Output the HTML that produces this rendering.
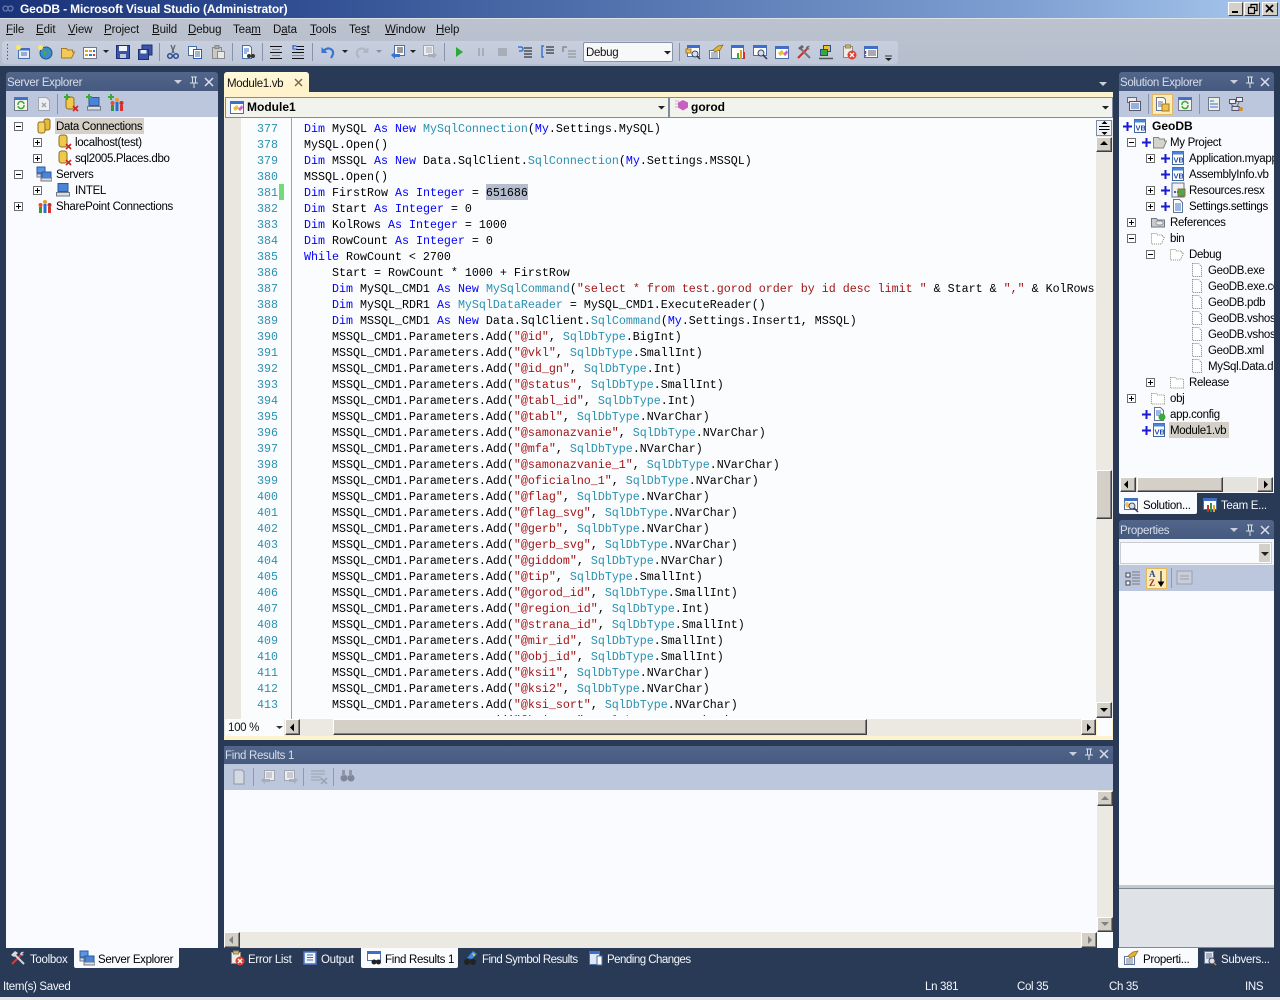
<!DOCTYPE html>
<html><head><meta charset="utf-8"><title>GeoDB - Microsoft Visual Studio</title>
<style>
html,body{margin:0;padding:0;width:1280px;height:1000px;overflow:hidden;background:#293a56}
body{position:relative;font:11.5px/16px "Liberation Sans",sans-serif;color:#000;letter-spacing:-.32px}
.a,.t{position:absolute}
.t{white-space:nowrap;height:16px;margin-top:1px}
.w{color:#f4f6fa}
.g{color:#d8dfeb}
u{text-decoration:underline}
.btn{position:absolute;box-sizing:border-box;background:#d4d0c8;border:1px solid;border-color:#fff #404040 #404040 #fff;box-shadow:inset -1px -1px 0 #808080}
.sbt{position:absolute;background:#ece9e2}
.hd{position:absolute;background:linear-gradient(#52658a,#465a80)}
.tb{position:absolute;background:#bcc7dd}
.wh{position:absolute;background:#f9fbff}
.tab{position:absolute;background:#f9fbff;border-radius:0 0 2px 2px}
pre{position:absolute;margin:0;font:11.67px/16px "Liberation Mono",monospace;letter-spacing:0;white-space:pre}
.k{color:#00f}.y{color:#2b91af}.s{color:#a31515}
svg{position:absolute;left:0;top:0;pointer-events:none}
</style></head>
<body>
<!-- title bar -->
<div class="a" style="left:0;top:0;width:1280px;height:18px;background:linear-gradient(90deg,#1a3278 0,#2c4a8e 20%,#5475b0 50%,#7fa0d2 80%,#a8c8ee 100%)"></div>
<div class="t" style="left:20px;top:0;color:#fff;font-weight:bold;font-size:12px;letter-spacing:-.15px">GeoDB - Microsoft Visual Studio (Administrator)</div>
<div class="a" style="left:1228px;top:2px;width:15px;height:14px;background:#d4d0c8;box-sizing:border-box;border:1px solid;border-color:#fff #404040 #404040 #fff"></div>
<div class="a" style="left:1244px;top:2px;width:16px;height:14px;background:#d4d0c8;box-sizing:border-box;border:1px solid;border-color:#fff #404040 #404040 #fff"></div>
<div class="a" style="left:1262px;top:2px;width:16px;height:14px;background:#d4d0c8;box-sizing:border-box;border:1px solid;border-color:#fff #404040 #404040 #fff"></div>
<!-- menu + toolbar band -->
<div class="a" style="left:0;top:18px;width:1280px;height:48px;background:linear-gradient(#bcc3cf,#b6bdcc);border-top:1px solid #dde1e8;box-sizing:border-box"></div>
<div class="a" style="left:2px;top:41px;width:896px;height:23px;background:linear-gradient(#c8d0df,#bfc8d9);border-radius:3px"></div>
<div class="t" style="left:6px;top:21px;color:#111;letter-spacing:-.1px"><u>F</u>ile</div>
<div class="t" style="left:36px;top:21px;color:#111;letter-spacing:-.1px"><u>E</u>dit</div>
<div class="t" style="left:68px;top:21px;color:#111;letter-spacing:-.1px"><u>V</u>iew</div>
<div class="t" style="left:104px;top:21px;color:#111;letter-spacing:-.1px"><u>P</u>roject</div>
<div class="t" style="left:152px;top:21px;color:#111;letter-spacing:-.1px"><u>B</u>uild</div>
<div class="t" style="left:188px;top:21px;color:#111;letter-spacing:-.1px"><u>D</u>ebug</div>
<div class="t" style="left:233px;top:21px;color:#111;letter-spacing:-.1px">Tea<u>m</u></div>
<div class="t" style="left:273px;top:21px;color:#111;letter-spacing:-.1px">D<u>a</u>ta</div>
<div class="t" style="left:310px;top:21px;color:#111;letter-spacing:-.1px"><u>T</u>ools</div>
<div class="t" style="left:349px;top:21px;color:#111;letter-spacing:-.1px">Te<u>s</u>t</div>
<div class="t" style="left:385px;top:21px;color:#111;letter-spacing:-.1px"><u>W</u>indow</div>
<div class="t" style="left:436px;top:21px;color:#111;letter-spacing:-.1px"><u>H</u>elp</div>
<!-- debug combo -->
<div class="a" style="left:583px;top:42px;width:90px;height:20px;box-sizing:border-box;background:#f7f8fa;border:1px solid #8a93a8;border-radius:2px"></div>
<div class="t" style="left:586px;top:44px;color:#111">Debug</div>

<!-- Server Explorer -->
<div class="hd" style="left:6px;top:72px;width:212px;height:19px;border-radius:3px 3px 0 0"></div>
<div class="t g" style="left:7px;top:74px">Server Explorer</div>
<div class="tb" style="left:6px;top:91px;width:212px;height:26px"></div>
<div class="wh" style="left:6px;top:117px;width:212px;height:831px"></div>
<div class="a" style="left:55px;top:118px;width:89px;height:16px;background:#d4d0c8"></div>
<div class="t" style="left:56px;top:118px">Data Connections</div>
<div class="t" style="left:75px;top:134px">localhost(test)</div>
<div class="t" style="left:75px;top:150px">sql2005.Places.dbo</div>
<div class="t" style="left:56px;top:166px">Servers</div>
<div class="t" style="left:75px;top:182px">INTEL</div>
<div class="t" style="left:56px;top:198px">SharePoint Connections</div>

<!-- Editor -->
<div class="a" style="left:224px;top:72px;width:85px;height:20px;background:linear-gradient(#fff8dc,#fff2c8);border-radius:3px 3px 0 0"></div>
<div class="t" style="left:227px;top:75px;color:#111">Module1.vb</div>
<div class="a" style="left:224px;top:92px;width:889px;height:648px;background:#fff3cd"></div>
<div class="a" style="left:225px;top:97px;width:888px;height:21px;background:#7f8ba3"></div>
<div class="a" style="left:226px;top:98px;width:442px;height:19px;background:#f3f3ee"></div>
<div class="a" style="left:670px;top:98px;width:442px;height:19px;background:#f3f3ee"></div>
<div class="t" style="left:247px;top:99px;margin-top:0;font-weight:bold;color:#000;letter-spacing:0;font-size:12px">Module1</div>
<div class="t" style="left:691px;top:99px;margin-top:0;font-weight:bold;color:#000;letter-spacing:0;font-size:12px">gorod</div>
<div class="wh" style="left:224px;top:118px;width:889px;height:601px;background:#fbfcfe"></div>
<div class="a" style="left:224px;top:118px;width:17px;height:601px;background:#e9e7e0"></div>
<div class="a" style="left:279px;top:184px;width:5px;height:16px;background:#6fdc78"></div>
<div class="a" style="left:291px;top:118px;width:1px;height:601px;background:#a0a0a0"></div>
<div class="a" style="left:242px;top:120px;width:36px;height:596px;overflow:hidden"><pre style="left:0;top:1px;width:36px;text-align:right;color:#2b91af">377
378
379
380
381
382
383
384
385
386
387
388
389
390
391
392
393
394
395
396
397
398
399
400
401
402
403
404
405
406
407
408
409
410
411
412
413
414</pre></div>
<div class="a" style="left:486px;top:184px;width:42px;height:16px;background:#b4bccd"></div>
<div class="a" style="left:304px;top:120px;width:791px;height:596px;overflow:hidden"><pre style="left:0;top:1px"><span class="k">Dim</span> MySQL <span class="k">As</span> <span class="k">New</span> <span class="y">MySqlConnection</span>(<span class="k">My</span>.Settings.MySQL)
MySQL.Open()
<span class="k">Dim</span> MSSQL <span class="k">As</span> <span class="k">New</span> Data.SqlClient.<span class="y">SqlConnection</span>(<span class="k">My</span>.Settings.MSSQL)
MSSQL.Open()
<span class="k">Dim</span> FirstRow <span class="k">As</span> <span class="k">Integer</span> = 651686
<span class="k">Dim</span> Start <span class="k">As</span> <span class="k">Integer</span> = 0
<span class="k">Dim</span> KolRows <span class="k">As</span> <span class="k">Integer</span> = 1000
<span class="k">Dim</span> RowCount <span class="k">As</span> <span class="k">Integer</span> = 0
<span class="k">While</span> RowCount &lt; 2700
    Start = RowCount * 1000 + FirstRow
    <span class="k">Dim</span> MySQL_CMD1 <span class="k">As</span> <span class="k">New</span> <span class="y">MySqlCommand</span>(<span class="s">"select * from test.gorod order by id desc limit "</span> &amp; Start &amp; <span class="s">","</span> &amp; KolRows
    <span class="k">Dim</span> MySQL_RDR1 <span class="k">As</span> <span class="y">MySqlDataReader</span> = MySQL_CMD1.ExecuteReader()
    <span class="k">Dim</span> MSSQL_CMD1 <span class="k">As</span> <span class="k">New</span> Data.SqlClient.<span class="y">SqlCommand</span>(<span class="k">My</span>.Settings.Insert1, MSSQL)
    MSSQL_CMD1.Parameters.Add(<span class="s">"@id"</span>, <span class="y">SqlDbType</span>.BigInt)
    MSSQL_CMD1.Parameters.Add(<span class="s">"@vkl"</span>, <span class="y">SqlDbType</span>.SmallInt)
    MSSQL_CMD1.Parameters.Add(<span class="s">"@id_gn"</span>, <span class="y">SqlDbType</span>.Int)
    MSSQL_CMD1.Parameters.Add(<span class="s">"@status"</span>, <span class="y">SqlDbType</span>.SmallInt)
    MSSQL_CMD1.Parameters.Add(<span class="s">"@tabl_id"</span>, <span class="y">SqlDbType</span>.Int)
    MSSQL_CMD1.Parameters.Add(<span class="s">"@tabl"</span>, <span class="y">SqlDbType</span>.NVarChar)
    MSSQL_CMD1.Parameters.Add(<span class="s">"@samonazvanie"</span>, <span class="y">SqlDbType</span>.NVarChar)
    MSSQL_CMD1.Parameters.Add(<span class="s">"@mfa"</span>, <span class="y">SqlDbType</span>.NVarChar)
    MSSQL_CMD1.Parameters.Add(<span class="s">"@samonazvanie_1"</span>, <span class="y">SqlDbType</span>.NVarChar)
    MSSQL_CMD1.Parameters.Add(<span class="s">"@oficialno_1"</span>, <span class="y">SqlDbType</span>.NVarChar)
    MSSQL_CMD1.Parameters.Add(<span class="s">"@flag"</span>, <span class="y">SqlDbType</span>.NVarChar)
    MSSQL_CMD1.Parameters.Add(<span class="s">"@flag_svg"</span>, <span class="y">SqlDbType</span>.NVarChar)
    MSSQL_CMD1.Parameters.Add(<span class="s">"@gerb"</span>, <span class="y">SqlDbType</span>.NVarChar)
    MSSQL_CMD1.Parameters.Add(<span class="s">"@gerb_svg"</span>, <span class="y">SqlDbType</span>.NVarChar)
    MSSQL_CMD1.Parameters.Add(<span class="s">"@giddom"</span>, <span class="y">SqlDbType</span>.NVarChar)
    MSSQL_CMD1.Parameters.Add(<span class="s">"@tip"</span>, <span class="y">SqlDbType</span>.SmallInt)
    MSSQL_CMD1.Parameters.Add(<span class="s">"@gorod_id"</span>, <span class="y">SqlDbType</span>.SmallInt)
    MSSQL_CMD1.Parameters.Add(<span class="s">"@region_id"</span>, <span class="y">SqlDbType</span>.Int)
    MSSQL_CMD1.Parameters.Add(<span class="s">"@strana_id"</span>, <span class="y">SqlDbType</span>.SmallInt)
    MSSQL_CMD1.Parameters.Add(<span class="s">"@mir_id"</span>, <span class="y">SqlDbType</span>.SmallInt)
    MSSQL_CMD1.Parameters.Add(<span class="s">"@obj_id"</span>, <span class="y">SqlDbType</span>.SmallInt)
    MSSQL_CMD1.Parameters.Add(<span class="s">"@ksi1"</span>, <span class="y">SqlDbType</span>.NVarChar)
    MSSQL_CMD1.Parameters.Add(<span class="s">"@ksi2"</span>, <span class="y">SqlDbType</span>.NVarChar)
    MSSQL_CMD1.Parameters.Add(<span class="s">"@ksi_sort"</span>, <span class="y">SqlDbType</span>.NVarChar)
    MSSQL_CMD1.Parameters.Add(<span class="s">"@ksi_txt"</span>, <span class="y">SqlDbType</span>.NVarChar)</pre></div>
<!-- editor v scroll -->
<div class="sbt" style="left:1096px;top:120px;width:17px;height:597px"></div>
<div class="a" style="left:1096px;top:120px;width:16px;height:16px;background:#eef1f6;box-sizing:border-box;border:1px solid #7f8ba3"></div>
<div class="btn" style="left:1096px;top:137px;width:16px;height:15px"></div>
<div class="btn" style="left:1096px;top:470px;width:16px;height:49px"></div>
<div class="btn" style="left:1096px;top:702px;width:16px;height:16px"></div>
<!-- editor h scroll -->
<div class="sbt" style="left:224px;top:719px;width:872px;height:17px"></div>
<div class="a" style="left:225px;top:719px;width:59px;height:17px;background:#fbfcfe"></div>
<div class="t" style="left:228px;top:719px;color:#111">100 %</div>
<div class="btn" style="left:285px;top:719px;width:15px;height:16px"></div>
<div class="btn" style="left:333px;top:719px;width:534px;height:16px"></div>
<div class="btn" style="left:1081px;top:719px;width:15px;height:16px"></div>
<div class="a" style="left:1097px;top:719px;width:15px;height:17px;background:#fbfcfe"></div>

<!-- Find Results -->
<div class="hd" style="left:224px;top:746px;width:889px;height:18px"></div>
<div class="t g" style="left:225px;top:747px">Find Results 1</div>
<div class="tb" style="left:224px;top:764px;width:889px;height:26px"></div>
<div class="wh" style="left:224px;top:790px;width:889px;height:158px"></div>
<div class="sbt" style="left:1097px;top:790px;width:16px;height:142px"></div>
<div class="btn" style="left:1097px;top:791px;width:16px;height:15px"></div>
<div class="btn" style="left:1097px;top:917px;width:16px;height:15px"></div>
<div class="sbt" style="left:224px;top:932px;width:873px;height:16px"></div>
<div class="btn" style="left:224px;top:932px;width:16px;height:16px"></div>
<div class="btn" style="left:1081px;top:932px;width:16px;height:16px"></div>

<!-- Solution Explorer -->
<div class="hd" style="left:1119px;top:72px;width:155px;height:19px;border-radius:3px 3px 0 0"></div>
<div class="t g" style="left:1120px;top:74px">Solution Explorer</div>
<div class="tb" style="left:1119px;top:91px;width:155px;height:26px"></div>
<div class="a" style="left:1152px;top:94px;width:21px;height:21px;box-sizing:border-box;background:#fdebb8;border:1px solid #e2b865"></div>
<div class="wh" style="left:1119px;top:117px;width:155px;height:376px;overflow:hidden">
<div class="t" style="left:33px;top:1px;margin-top:0;font-weight:bold;font-size:12px;letter-spacing:0">GeoDB</div>
<div class="t" style="left:51px;top:17px">My Project</div>
<div class="t" style="left:70px;top:33px">Application.myapp</div>
<div class="t" style="left:70px;top:49px">AssemblyInfo.vb</div>
<div class="t" style="left:70px;top:65px">Resources.resx</div>
<div class="t" style="left:70px;top:81px">Settings.settings</div>
<div class="t" style="left:51px;top:97px">References</div>
<div class="t" style="left:51px;top:113px">bin</div>
<div class="t" style="left:70px;top:129px">Debug</div>
<div class="t" style="left:89px;top:145px">GeoDB.exe</div>
<div class="t" style="left:89px;top:161px">GeoDB.exe.config</div>
<div class="t" style="left:89px;top:177px">GeoDB.pdb</div>
<div class="t" style="left:89px;top:193px">GeoDB.vshost.exe</div>
<div class="t" style="left:89px;top:209px">GeoDB.vshost.exe.manifest</div>
<div class="t" style="left:89px;top:225px">GeoDB.xml</div>
<div class="t" style="left:89px;top:241px">MySql.Data.dll</div>
<div class="t" style="left:70px;top:257px">Release</div>
<div class="t" style="left:51px;top:273px">obj</div>
<div class="t" style="left:51px;top:289px">app.config</div>
<div class="a" style="left:50px;top:305px;width:60px;height:16px;background:#d4d0c8"></div>
<div class="t" style="left:51px;top:305px">Module1.vb</div>
</div>
<div class="sbt" style="left:1120px;top:477px;width:153px;height:15px;background:#e4e3de"></div>
<div class="btn" style="left:1120px;top:477px;width:16px;height:15px"></div>
<div class="btn" style="left:1137px;top:477px;width:86px;height:15px"></div>
<div class="btn" style="left:1257px;top:477px;width:16px;height:15px"></div>
<div class="tab" style="left:1119px;top:493px;width:78px;height:21px"></div>
<div class="t" style="left:1143px;top:497px">Solution...</div>
<div class="t w" style="left:1221px;top:497px">Team E...</div>

<!-- Properties -->
<div class="hd" style="left:1119px;top:520px;width:155px;height:19px;border-radius:3px 3px 0 0"></div>
<div class="t g" style="left:1120px;top:522px">Properties</div>
<div class="a" style="left:1119px;top:539px;width:155px;height:26px;background:#f1f3f6"></div>
<div class="a" style="left:1120px;top:542px;width:152px;height:22px;background:#f9fbff;box-sizing:border-box;border:1px solid #c9ccd2"></div>
<div class="a" style="left:1259px;top:544px;width:11px;height:18px;background:#d4d0c8"></div>
<div class="tb" style="left:1119px;top:565px;width:155px;height:26px"></div>
<div class="a" style="left:1146px;top:568px;width:21px;height:21px;box-sizing:border-box;background:#fdebb8;border:1px solid #e2b865"></div>
<div class="wh" style="left:1119px;top:591px;width:155px;height:294px"></div>
<div class="a" style="left:1119px;top:885px;width:155px;height:4px;background:#c6c9d0;border-bottom:1px solid #808890;box-sizing:border-box"></div>
<div class="a" style="left:1119px;top:889px;width:155px;height:59px;background:#dfe2e7;box-sizing:border-box;border-bottom:1px solid #808890"></div>

<!-- bottom tabs -->
<div class="t w" style="left:30px;top:951px">Toolbox</div>
<div class="tab" style="left:74px;top:948px;width:105px;height:20px"></div>
<div class="t" style="left:98px;top:951px">Server Explorer</div>
<div class="t w" style="left:248px;top:951px">Error List</div>
<div class="t w" style="left:321px;top:951px">Output</div>
<div class="tab" style="left:361px;top:948px;width:97px;height:20px"></div>
<div class="t" style="left:385px;top:951px">Find Results 1</div>
<div class="t w" style="left:482px;top:951px;letter-spacing:-.52px">Find Symbol Results</div>
<div class="t w" style="left:607px;top:951px;letter-spacing:-.52px">Pending Changes</div>
<div class="tab" style="left:1118px;top:948px;width:80px;height:20px"></div>
<div class="t" style="left:1143px;top:951px">Properti...</div>
<div class="t w" style="left:1221px;top:951px">Subvers...</div>
<!-- status -->
<div class="t w" style="left:3px;top:978px">Item(s) Saved</div>
<div class="t w" style="left:925px;top:978px">Ln 381</div>
<div class="t w" style="left:1017px;top:978px">Col 35</div>
<div class="t w" style="left:1109px;top:978px">Ch 35</div>
<div class="t w" style="left:1245px;top:978px">INS</div>
<div class="a" style="left:0;top:997px;width:1280px;height:3px;background:#e6e4de"></div>

<!-- ICONS -->
<svg width="1280" height="1000" viewBox="0 0 1280 1000" style="z-index:5">
<defs>
<symbol id="mn" viewBox="0 0 9 9"><rect x=".5" y=".5" width="8" height="8" fill="#fff" stroke="#6e6e6e"/><path d="M2 4.5h5" stroke="#000"/></symbol>
<symbol id="pl" viewBox="0 0 9 9"><rect x=".5" y=".5" width="8" height="8" fill="#fff" stroke="#6e6e6e"/><path d="M2 4.5h5M4.500 2v5" stroke="#000"/></symbol>
<symbol id="vs" viewBox="0 0 9 9"><path d="M4.500 0v9M0 4.500h9" stroke="#1a1ad0" stroke-width="2"/></symbol>
<symbol id="db" viewBox="0 0 16 16"><rect x="8" y="1" width="6" height="11" rx="2" fill="#e8b93a" stroke="#8a6d1c"/><rect x="2" y="4" width="7" height="11" rx="2" fill="#f4d35e" stroke="#8a6d1c"/></symbol>
<symbol id="dbx" viewBox="0 0 16 16"><rect x="2" y="1" width="8" height="12" rx="2.500" fill="#f0c94a" stroke="#8a6d1c"/><path d="M9 10l5 5M14 10l-5 5" stroke="#d81e1e" stroke-width="1.600"/></symbol>
<symbol id="pc" viewBox="0 0 16 16"><rect x="3" y="1.500" width="10" height="8" fill="#4a84d8" stroke="#2f5a9a"/><rect x="1.500" y="10.500" width="13" height="3.500" fill="#d8dde6" stroke="#70788a"/></symbol>
<symbol id="pcs" viewBox="0 0 16 16"><rect x="1" y="1" width="8" height="6" fill="#5a94e4" stroke="#2f5a9a"/><rect x="6" y="6" width="9" height="6" fill="#4a84d8" stroke="#2f5a9a"/><rect x="5" y="12" width="11" height="3" fill="#d8dde6" stroke="#70788a"/><rect x="1" y="8" width="4" height="3" fill="#d8dde6" stroke="#70788a"/></symbol>
<symbol id="sp" viewBox="0 0 16 16"><circle cx="3.500" cy="7" r="2" fill="#e34f2b"/><rect x="2" y="9" width="3" height="6" fill="#2a9a3c"/><circle cx="8" cy="4" r="2" fill="#e8a020"/><rect x="6.500" y="6" width="3" height="9" fill="#2a6ed0"/><circle cx="12.500" cy="7" r="2" fill="#d02a2a"/><rect x="11" y="9" width="3" height="6" fill="#d8352a"/></symbol>
<symbol id="fo" viewBox="0 0 16 16"><path d="M1.500 3.500h5l1 1.500h5v2h2l-3 7h-10z" fill="#d4d4cc" stroke="#808878"/></symbol>
<symbol id="fd" viewBox="0 0 16 16"><path d="M1.500 3.500h5l1 1.500h7v9h-13z" fill="#fff" stroke="#8d8d70" stroke-dasharray="1 1"/></symbol>
<symbol id="fdo" viewBox="0 0 16 16"><path d="M1.500 3.500h5l1 1.500h5v2h2l-3 7h-10z" fill="#fff" stroke="#8d8d70" stroke-dasharray="1 1"/></symbol>
<symbol id="fr" viewBox="0 0 16 16"><path d="M1.500 4.500h5l1 1.500h7v7h-13z" fill="#c9cbcc" stroke="#70787e"/><rect x="6" y="7" width="7" height="4" rx="2" fill="#e8ecef" stroke="#70787e" stroke-width=".7"/></symbol>
<symbol id="fl" viewBox="0 0 16 16"><path d="M3.500 1.500h6l3 3v10h-9z" fill="#fff" stroke="#6f7f9a" stroke-dasharray="1 1"/></symbol>
<symbol id="vb" viewBox="0 0 16 16"><rect x="2.500" y="1.500" width="11" height="13" fill="#fff" stroke="#40669a"/><rect x="2.500" y="1.500" width="11" height="3" fill="#4a84d8"/><text x="3.500" y="12.500" font-family="Liberation Sans,sans-serif" font-size="7.500" font-weight="bold" fill="#1a4aa8" letter-spacing="0">VB</text></symbol>
<symbol id="doc" viewBox="0 0 16 16"><path d="M3.500 1.500h6l3 3v10h-9z" fill="#fff" stroke="#5f7396"/><path d="M5 6h6M5 8h6M5 10h6M5 12h6" stroke="#3a6ed0"/></symbol>
<symbol id="gr" viewBox="0 0 16 16"><path d="M3.500 1.500h6l3 3v10h-9z" fill="#fff" stroke="#5f7396"/><path d="M5 5h5M5 7h5M5 9h3" stroke="#3a6ed0"/><circle cx="11" cy="11" r="3.500" fill="#3aa83a"/></symbol>
<symbol id="dbt" viewBox="0 0 16 16"><rect x="2" y="1" width="12" height="14" fill="#eef0f4" stroke="#5f7396"/><path d="M4 9h2v2H4zM7 9h2v2H7z" fill="#40669a"/><rect x="8" y="7" width="7" height="7" fill="#4fa850" stroke="#9a6a2a"/></symbol>
<symbol id="win" viewBox="0 0 16 16"><rect x="1.500" y="2.500" width="13" height="11" fill="#fff" stroke="#4a6ea8"/><rect x="1.500" y="2.500" width="13" height="2.500" fill="#3a6ed0"/></symbol>
<symbol id="new" viewBox="0 0 16 16"><rect x="3.500" y="4.500" width="11" height="10" fill="#e4ecf8" stroke="#4a6ea8"/><rect x="3.500" y="4.500" width="11" height="2" fill="#3a6ed0"/><path d="M6 9h6M6 11h6" stroke="#4a6ea8"/><circle cx="3.500" cy="3.500" r="2.500" fill="#ffe860"/></symbol>
<symbol id="glb" viewBox="0 0 16 16"><circle cx="9" cy="9" r="6" fill="#3a8ad0" stroke="#27568c"/><path d="M6 6l3 1 1 3-3 2zM11 5l3 3-2 1z" fill="#4aa84a"/><circle cx="3.500" cy="3.500" r="2.500" fill="#ffe860"/></symbol>
<symbol id="opn" viewBox="0 0 16 16"><path d="M1.500 4.500h5l1 1.500h5v2h2l-3 6h-10z" fill="#f5c85a" stroke="#a57a20"/></symbol>
<symbol id="add" viewBox="0 0 16 16"><rect x="1.500" y="3.500" width="13" height="11" fill="#fff" stroke="#70788a"/><path d="M3 6h3v2H3zM7 6h3v2H7zM3 10h3v2H3z" fill="#e0a030"/><path d="M11 6h2v2h-2zM7 10h3v2H7z" fill="#3a6ed0"/><path d="M11 10h2v2h-2z" fill="#d04030"/></symbol>
<symbol id="sv" viewBox="0 0 16 16"><rect x="1.500" y="1.500" width="13" height="13" fill="#3a55a8" stroke="#1d2f70"/><rect x="4" y="2" width="8" height="5" fill="#f0f4fa"/><rect x="5" y="10" width="6" height="4" fill="#c0c8d8"/></symbol>
<symbol id="sva" viewBox="0 0 16 16"><rect x="5" y="1" width="10" height="10" fill="#3a55a8" stroke="#1d2f70"/><rect x="1.500" y="5.500" width="10" height="10" fill="#3a55a8" stroke="#1d2f70"/><rect x="3.500" y="6" width="6" height="3.500" fill="#e8eef8"/></symbol>
<symbol id="cut" viewBox="0 0 16 16"><path d="M6 1l3 8M10 1L7 9" stroke="#606878" stroke-width="1.300"/><circle cx="5" cy="12" r="2.300" fill="none" stroke="#2a4a98" stroke-width="1.500"/><circle cx="11" cy="12" r="2.300" fill="none" stroke="#2a4a98" stroke-width="1.500"/></symbol>
<symbol id="cpy" viewBox="0 0 16 16"><rect x="1.500" y="2.500" width="8" height="9" fill="#fff" stroke="#4a6ea8"/><rect x="6.500" y="5.500" width="8" height="9" fill="#fff" stroke="#2a5ac0"/><path d="M8 8h5M8 10h5M8 12h5" stroke="#4a6ea8"/></symbol>
<symbol id="pst" viewBox="0 0 16 16"><rect x="2.500" y="3.500" width="9" height="11" fill="#c8c8c4" stroke="#8a8a8a"/><rect x="7.500" y="7.500" width="7" height="7" fill="#e8e8e8" stroke="#8a8a8a"/><rect x="5" y="1.500" width="4" height="3" fill="#aaa" stroke="#888"/></symbol>
<symbol id="fnd" viewBox="0 0 16 16"><path d="M2.500 1.500h7l2 2v11h-9z" fill="#fff" stroke="#4a6ea8"/><path d="M4 5h5M4 7h5M4 9h3" stroke="#3a6ed0"/><circle cx="9" cy="12" r="2" fill="#333"/><circle cx="13" cy="12" r="2" fill="#333"/></symbol>
<symbol id="c1" viewBox="0 0 16 16"><path d="M2 2.500h12M2 8.500h12M2 14.500h12" stroke="#111"/><path d="M4 5.500h8M4 11.500h8" stroke="#2ab0c0"/></symbol>
<symbol id="c2" viewBox="0 0 16 16"><path d="M6 2.500h8M6 5.500h8M2 8.500h12M2 14.500h12" stroke="#111"/><path d="M2 11.500h12" stroke="#2ab0c0"/><path d="M3 5a2 2 0 014-2M3 1v4h4" stroke="#2a5ac0" fill="none"/></symbol>
<symbol id="und" viewBox="0 0 16 16"><path d="M4 7a5 5 0 018-1c2 2 1 5-1 8" fill="none" stroke="#3a74d0" stroke-width="2.200"/><path d="M1.500 3v6h6z" fill="#3a74d0"/></symbol>
<symbol id="red" viewBox="0 0 16 16"><path d="M12 7a5 5 0 00-8-1c-2 2-1 5 1 8" fill="none" stroke="#b0b6c2" stroke-width="2.200"/><path d="M14.500 3v6h-6z" fill="#b0b6c2"/></symbol>
<symbol id="nb" viewBox="0 0 16 16"><rect x="4.500" y="1.500" width="10" height="10" fill="#fff" stroke="#4a6ea8"/><path d="M7 4h6M7 6h6M7 8h6" stroke="#333"/><path d="M1 11l4-3v2h5v3H5v2z" fill="#3a74d0"/></symbol>
<symbol id="nf" viewBox="0 0 16 16"><rect x="1.500" y="1.500" width="10" height="10" fill="#eceef2" stroke="#a0a6b0"/><path d="M4 4h6M4 6h6M4 8h6" stroke="#a0a6b0"/><path d="M15 11l-4-3v2H6v3h5v2z" fill="#a8aeb8"/></symbol>
<symbol id="i1" viewBox="0 0 16 16"><path d="M7 4h8M7 7h8M7 10h8M7 13h8" stroke="#111"/><path d="M1 3h3a2 2 0 010 4H2" fill="none" stroke="#3a74d0" stroke-width="1.500"/></symbol>
<symbol id="i2" viewBox="0 0 16 16"><path d="M7 3h8M7 6h8M7 9h8" stroke="#111"/><path d="M5 2H3v11h2" fill="none" stroke="#3a74d0" stroke-width="1.500"/></symbol>
<symbol id="i3" viewBox="0 0 16 16"><path d="M7 7h8M7 10h8M7 13h8" stroke="#8a8a8a"/><path d="M2 8V3h4" fill="none" stroke="#8a8a8a" stroke-width="1.500"/></symbol>
<symbol id="t1" viewBox="0 0 16 16"><rect x="2.500" y="1.500" width="12" height="11" fill="#fff" stroke="#4a6ea8"/><rect x="2.500" y="1.500" width="12" height="2.500" fill="#3a6ed0"/><path d="M1 5h5v4H1z" fill="#f0c050" stroke="#a57a20"/><circle cx="10" cy="10" r="3" fill="#cfe0f4" stroke="#445"/><path d="M12 12l3 3" stroke="#335" stroke-width="1.500"/></symbol>
<symbol id="t2" viewBox="0 0 16 16"><rect x="1.500" y="6.500" width="10" height="8" fill="#fff" stroke="#5f7396"/><path d="M3 9h7M3 11h7M3 13h7" stroke="#6a7a98"/><path d="M5 6l5-4 5-1-3 5-5 2z" fill="#e8b030" stroke="#8a6d1c" stroke-width=".7"/></symbol>
<symbol id="t3" viewBox="0 0 16 16"><rect x="1.500" y="1.500" width="12" height="13" fill="#fff" stroke="#4a6ea8"/><rect x="1.500" y="1.500" width="12" height="2.500" fill="#3a6ed0"/><rect x="7" y="9" width="2" height="6" fill="#3aa83a"/><rect x="10" y="6" width="2" height="9" fill="#e8a020"/><rect x="13" y="8" width="2" height="7" fill="#d03030"/></symbol>
<symbol id="t4" viewBox="0 0 16 16"><rect x="1.500" y="1.500" width="13" height="10" fill="#fff" stroke="#4a6ea8"/><rect x="1.500" y="1.500" width="13" height="2.500" fill="#3a6ed0"/><circle cx="9" cy="9" r="3" fill="#cfe0f4" stroke="#445"/><path d="M11 11l4 4" stroke="#335" stroke-width="1.500"/></symbol>
<symbol id="t5" viewBox="0 0 16 16"><rect x="1.500" y="2.500" width="13" height="12" fill="#fff" stroke="#4a6ea8"/><rect x="1.500" y="2.500" width="13" height="2.500" fill="#3a6ed0"/><path d="M4 9l4-3 2 3-4 3z" fill="#e8c030"/><path d="M9 10l4-4 1 3-3 3z" fill="#d060c0"/></symbol>
<symbol id="t6" viewBox="0 0 16 16"><path d="M2 14l9-9" stroke="#c03030" stroke-width="2"/><path d="M14 14L5 5" stroke="#777" stroke-width="2"/><path d="M2 4l4-3 2 2-4 3zM10 4a3 3 0 014-2l-2 2 2 1a3 3 0 01-4-1z" fill="#666"/></symbol>
<symbol id="t7" viewBox="0 0 16 16"><rect x="5.500" y="1.500" width="7" height="6" fill="#e8c030" stroke="#2a4a98"/><rect x="2.500" y="5.500" width="7" height="6" fill="#3aa83a" stroke="#2a4a98"/><path d="M1 14.500h14" stroke="#555" stroke-width="1.500"/></symbol>
<symbol id="err" viewBox="0 0 16 16"><rect x="2.500" y="2.500" width="9" height="11" fill="#f0eee4" stroke="#8a8a8a"/><rect x="4.500" y="1" width="5" height="3" fill="#d8b860" stroke="#886"/><circle cx="11" cy="11" r="4.500" fill="#e04030"/><path d="M9 9l4 4M13 9l-4 4" stroke="#fff" stroke-width="1.300"/></symbol>
<symbol id="t9" viewBox="0 0 16 16"><rect x="1.500" y="2.500" width="13" height="11" fill="#fff" stroke="#4a6ea8"/><rect x="1.500" y="2.500" width="13" height="2.500" fill="#3a6ed0"/><path d="M5 7h8M5 9h8M5 11h8" stroke="#556"/><path d="M2.500 7v3M2.500 11v1.500" stroke="#e02020" stroke-width="1.500"/></symbol>
<symbol id="ref" viewBox="0 0 16 16"><rect x="1.500" y="1.500" width="13" height="13" fill="#f6f3e8" stroke="#70788a"/><rect x="1.500" y="1.500" width="13" height="2.500" fill="#3a6ed0"/><path d="M5 9a3 3 0 016-1M11 9a3 3 0 01-6 1" fill="none" stroke="#3aa83a" stroke-width="1.500"/></symbol>
<symbol id="del" viewBox="0 0 16 16"><path d="M2.500 1.500h8l3 3v10h-11z" fill="#eceef2" stroke="#a0a6b0"/><path d="M6 7l4 4M10 7l-4 4" stroke="#a0a6b0" stroke-width="1.500"/></symbol>
<symbol id="gl" viewBox="0 0 16 16"><path d="M3 1h8l2 2v12H3z" fill="#d5d9e2" stroke="#8e95a5"/></symbol>
<symbol id="sol" viewBox="0 0 16 16"><rect x="1.500" y="1.500" width="13" height="11" fill="#fff" stroke="#4a6ea8"/><rect x="1.500" y="1.500" width="13" height="2.500" fill="#3a6ed0"/><path d="M1 6l4-1 2 4-3 2z" fill="#f0c050"/><circle cx="9" cy="9" r="3" fill="#cfe0f4" stroke="#445"/><path d="M11 11l4 4" stroke="#335" stroke-width="1.500"/></symbol>
<symbol id="tools" viewBox="0 0 16 16"><path d="M2 14l9-9" stroke="#d04040" stroke-width="2"/><path d="M14 14L5 5" stroke="#d0d4dc" stroke-width="2"/><path d="M1 5l4-4 3 2-4 4zM10 4a3 3 0 014-2l-2 2 2 1a3 3 0 01-4-1z" fill="#d8dce2"/></symbol>
<symbol id="out" viewBox="0 0 16 16"><rect x="2" y="2" width="12" height="12" fill="#eef2fa" stroke="#4a74c8" stroke-width="1.500"/><path d="M5 5h6M5 7.500h6M5 10h6" stroke="#4a6ea8"/></symbol>
<symbol id="fr1" viewBox="0 0 16 16"><rect x="1.500" y="1.500" width="13" height="9" fill="#fff" stroke="#4a6ea8"/><rect x="1.500" y="1.500" width="13" height="2.500" fill="#3a6ed0"/><circle cx="8" cy="12" r="2.500" fill="#222"/><circle cx="12.500" cy="12" r="2.500" fill="#222"/></symbol>
<symbol id="fs" viewBox="0 0 16 16"><circle cx="4" cy="12" r="3" fill="#222"/><circle cx="10" cy="12" r="3" fill="#222"/><path d="M4 8l6-7 4 3-5 5z" fill="#3a8ae0"/><path d="M9 3l3 1-1 3z" fill="#f0d040"/></symbol>
<symbol id="pc2" viewBox="0 0 16 16"><rect x="1.500" y="1.500" width="10" height="13" fill="#dfe8f6" stroke="#4a6ea8"/><rect x="1.500" y="1.500" width="10" height="2.500" fill="#3a6ed0"/><rect x="9" y="6" width="5" height="9" fill="#fff" stroke="#4a6ea8"/></symbol>
<symbol id="prop" viewBox="0 0 16 16"><rect x="1.500" y="6.500" width="10" height="8" fill="#fff" stroke="#5f7396"/><path d="M3 9h7M3 11h7M3 13h7" stroke="#6a7a98"/><path d="M5 6l5-4 5-1-3 5-5 2z" fill="#e8b030" stroke="#8a6d1c" stroke-width=".7"/></symbol>
<symbol id="sub" viewBox="0 0 16 16"><rect x="2.500" y="1.500" width="9" height="12" fill="#e6ecf6" stroke="#68788e"/><path d="M4 4h6M4 6h6M4 8h6" stroke="#68788e"/><circle cx="10" cy="11" r="3" fill="#d8e2ee" stroke="#445"/><path d="M12 13l2 2" stroke="#d88820" stroke-width="1.500"/></symbol>
<symbol id="team" viewBox="0 0 16 16"><rect x="1.500" y="1.500" width="13" height="11" fill="#fff" stroke="#4a6ea8"/><rect x="1.500" y="1.500" width="13" height="2.500" fill="#3a6ed0"/><rect x="5" y="8" width="2" height="7" fill="#d02a2a"/><rect x="8" y="6" width="2" height="9" fill="#2a9a3c"/><rect x="11" y="8" width="2" height="7" fill="#e8a020"/></symbol>
<symbol id="se1" viewBox="0 0 16 16"><rect x="2.500" y="1.500" width="11" height="13" fill="#eef0e8" stroke="#70788a"/><path d="M4 5h4M4 8h8M4 11h8" stroke="#3a6ed0"/></symbol>
<symbol id="se2" viewBox="0 0 16 16"><rect x="1.500" y="3.500" width="6" height="4" fill="#eef0f4" stroke="#556"/><rect x="8.500" y="1.500" width="6" height="4" fill="#eef0f4" stroke="#556"/><path d="M3 8l3 3M11 6l-2 5" stroke="#667"/><rect x="4" y="10.500" width="7" height="4" fill="#cfe0f4" stroke="#556"/><circle cx="13" cy="13" r="2" fill="#e08a20"/></symbol>
<symbol id="se3" viewBox="0 0 16 16"><rect x="1.500" y="1.500" width="9" height="5" fill="#e8eaee" stroke="#667"/><rect x="3.500" y="5.500" width="11" height="9" fill="#eef0f4" stroke="#556"/><path d="M5 8h8M5 10h8M5 12h8" stroke="#3a6ed0"/></symbol>
<symbol id="se4" viewBox="0 0 16 16"><path d="M2.500 1.500h7l2 2v11h-9z" fill="#fff" stroke="#5f7396"/><path d="M4 6h5M4 8h5M4 10h4" stroke="#5f7396"/><path d="M8 8h7v7H8z" fill="#f0c050" stroke="#a57a20"/></symbol>
</defs>

<!-- title icon / window buttons -->
<path d="M3 8.500a2.500 2.500 0 015 0a2.500 2.500 0 005 0a2.500 2.500 0 00-5 0a2.500 2.500 0 01-5 0z" fill="none" stroke="#6a7ab0" stroke-width="1.300"/>
<path d="M1232 12h6" stroke="#000" stroke-width="2"/>
<path d="M1248.500 7.500h6v6h-6zM1251 7V4.500h6v6h-2" fill="none" stroke="#000" stroke-width="1.200"/>
<path d="M1266 5l7 7M1273 5l-7 7" stroke="#000" stroke-width="1.800"/>

<!-- toolbar grips -->
<path d="M7.500 44v16" stroke="#50596e" stroke-dasharray="1.500 2"/>
<path d="M885 56h7" stroke="#333"/><path d="M885 58h7l-3.500 3z" fill="#222"/>
<!-- toolbar seps -->
<path d="M159.500 43v18M232.500 43v18M262.500 43v18M312.500 43v18M444.500 43v18M679.500 43v18" stroke="#8892a8"/>
<!-- toolbar icons -->
<use href="#new" x="15" y="44" width="16" height="16"/>
<use href="#glb" x="37" y="44" width="16" height="16"/>
<use href="#opn" x="60" y="44" width="16" height="16"/>
<use href="#add" x="82" y="44" width="16" height="16"/>
<path d="M103 50h6l-3 3z" fill="#222"/>
<use href="#sv" x="115" y="44" width="16" height="16"/>
<use href="#sva" x="137" y="44" width="16" height="16"/>
<use href="#cut" x="165" y="44" width="16" height="16"/>
<use href="#cpy" x="187" y="44" width="16" height="16"/>
<use href="#pst" x="210" y="44" width="16" height="16"/>
<use href="#fnd" x="240" y="44" width="16" height="16"/>
<use href="#c1" x="268" y="44" width="16" height="16"/>
<use href="#c2" x="290" y="44" width="16" height="16"/>
<use href="#und" x="320" y="44" width="16" height="16"/>
<path d="M342 50h6l-3 3z" fill="#222"/>
<use href="#red" x="354" y="44" width="16" height="16"/>
<path d="M376 50h6l-3 3z" fill="#8a90a0"/>
<use href="#nb" x="390" y="44" width="16" height="16"/>
<path d="M410 50h6l-3 3z" fill="#222"/>
<use href="#nf" x="422" y="44" width="16" height="16"/>
<path d="M456 47l7 5-7 5z" fill="#2fa83a"/>
<path d="M478 48h2v8h-2zM482 48h2v8h-2z" fill="#a8aeb8"/>
<rect x="498" y="48" width="9" height="8" fill="#a8aeb8"/>
<use href="#i1" x="517" y="44" width="16" height="16"/>
<use href="#i2" x="539" y="44" width="16" height="16"/>
<use href="#i3" x="561" y="44" width="16" height="16"/>
<path d="M664 51h7l-3.500 3.500z" fill="#222"/>
<use href="#t1" x="685" y="44" width="16" height="16"/>
<use href="#t2" x="708" y="44" width="16" height="16"/>
<use href="#t3" x="730" y="44" width="16" height="16"/>
<use href="#t4" x="752" y="44" width="16" height="16"/>
<use href="#t5" x="774" y="44" width="16" height="16"/>
<use href="#t6" x="796" y="44" width="16" height="16"/>
<use href="#t7" x="818" y="44" width="16" height="16"/>
<use href="#err" x="841" y="44" width="16" height="16"/>
<use href="#t9" x="863" y="44" width="16" height="16"/>

<!-- panel title glyphs: server explorer -->
<path d="M174 80h8l-4 4z" fill="#c8d0de"/><path d="M191 77h6M192.500 77v6h3v-6M190 83h8M194 83v5" fill="none" stroke="#d8dfeb"/><path d="M205 78l8 8M213 78l-8 8" stroke="#d8dfeb" stroke-width="1.500"/>
<!-- solution explorer -->
<path d="M1230 80h8l-4 4z" fill="#c8d0de"/><path d="M1247 77h6M1248.500 77v6h3v-6M1246 83h8M1250 83v5" fill="none" stroke="#d8dfeb"/><path d="M1261 78l8 8M1269 78l-8 8" stroke="#d8dfeb" stroke-width="1.500"/>
<!-- properties -->
<path d="M1230 528h8l-4 4z" fill="#c8d0de"/><path d="M1247 525h6M1248.500 525v6h3v-6M1246 531h8M1250 531v5" fill="none" stroke="#d8dfeb"/><path d="M1261 526l8 8M1269 526l-8 8" stroke="#d8dfeb" stroke-width="1.500"/>
<!-- find results -->
<path d="M1069 752h8l-4 4z" fill="#c8d0de"/><path d="M1086 749h6M1087.500 749v6h3v-6M1085 755h8M1089 755v5" fill="none" stroke="#d8dfeb"/><path d="M1100 750l8 8M1108 750l-8 8" stroke="#d8dfeb" stroke-width="1.500"/>
<!-- tab close & overflow -->
<path d="M295 79l7 7M302 79l-7 7" stroke="#7a6a50" stroke-width="1.500"/>
<path d="M1099 82h8l-4 4z" fill="#c8d0de"/>
<!-- nav bar -->
<use href="#t5" x="229" y="99" width="16" height="16"/>
<path d="M658 106h7l-3.500 3.500z" fill="#222"/>
<path d="M675 101h4M675 104h4M675 107h4" stroke="#b8b8b8"/><path d="M683 100l5 2.500v5l-5 3-5-3v-5z" fill="#c860c0"/>
<path d="M1102 106h7l-3.500 3.500z" fill="#222"/>

<!-- server explorer toolbar -->
<use href="#ref" x="13" y="96" width="16" height="16"/>
<use href="#del" x="36" y="96" width="16" height="16"/>
<path d="M57.500 94v20" stroke="#8892a8"/>
<use href="#dbx" x="64" y="96" width="16" height="16"/><path d="M64 97h6M67 94v6" stroke="#3aa83a" stroke-width="2"/>
<use href="#pc" x="86" y="96" width="16" height="16"/><path d="M86 97h6M89 94v6" stroke="#3aa83a" stroke-width="2"/>
<use href="#sp" x="109" y="96" width="16" height="16"/><path d="M108 97h6M111 94v6" stroke="#3aa83a" stroke-width="2"/>

<!-- server explorer tree -->
<use href="#mn" x="14" y="122" width="9" height="9"/>
<use href="#db" x="36" y="118" width="16" height="16"/>
<use href="#pl" x="33" y="138" width="9" height="9"/>
<use href="#dbx" x="57" y="134" width="16" height="16"/>
<use href="#pl" x="33" y="154" width="9" height="9"/>
<use href="#dbx" x="57" y="150" width="16" height="16"/>
<use href="#mn" x="14" y="170" width="9" height="9"/>
<use href="#pcs" x="36" y="166" width="16" height="16"/>
<use href="#pl" x="33" y="186" width="9" height="9"/>
<use href="#pc" x="55" y="182" width="16" height="16"/>
<use href="#pl" x="14" y="202" width="9" height="9"/>
<use href="#sp" x="37" y="198" width="16" height="16"/>

<!-- solution explorer toolbar -->
<use href="#se3" x="1126" y="96" width="16" height="16"/>
<path d="M1148.500 94v20M1199.500 94v20" stroke="#8892a8"/>
<use href="#se4" x="1154" y="96" width="16" height="16"/>
<use href="#ref" x="1177" y="96" width="16" height="16"/>
<use href="#se1" x="1206" y="96" width="16" height="16"/>
<use href="#se2" x="1228" y="96" width="16" height="16"/>

<!-- solution tree -->
<use href="#vs" x="1123" y="122" width="9" height="9"/><use href="#vb" x="1132" y="118" width="16" height="16"/>
<use href="#mn" x="1127" y="138" width="9" height="9"/><use href="#vs" x="1142" y="138" width="9" height="9"/><use href="#fo" x="1152" y="134" width="16" height="16"/>
<use href="#pl" x="1146" y="154" width="9" height="9"/><use href="#vs" x="1161" y="154" width="9" height="9"/><use href="#vb" x="1170" y="150" width="16" height="16"/>
<use href="#vs" x="1161" y="170" width="9" height="9"/><use href="#vb" x="1170" y="166" width="16" height="16"/>
<use href="#pl" x="1146" y="186" width="9" height="9"/><use href="#vs" x="1161" y="186" width="9" height="9"/><use href="#dbt" x="1170" y="182" width="16" height="16"/>
<use href="#pl" x="1146" y="202" width="9" height="9"/><use href="#vs" x="1161" y="202" width="9" height="9"/><use href="#doc" x="1170" y="198" width="16" height="16"/>
<use href="#pl" x="1127" y="218" width="9" height="9"/><use href="#fr" x="1150" y="214" width="16" height="16"/>
<use href="#mn" x="1127" y="234" width="9" height="9"/><use href="#fdo" x="1150" y="230" width="16" height="16"/>
<use href="#mn" x="1146" y="250" width="9" height="9"/><use href="#fdo" x="1169" y="246" width="16" height="16"/>
<use href="#fl" x="1189" y="262" width="16" height="16"/>
<use href="#fl" x="1189" y="278" width="16" height="16"/>
<use href="#fl" x="1189" y="294" width="16" height="16"/>
<use href="#fl" x="1189" y="310" width="16" height="16"/>
<use href="#fl" x="1189" y="326" width="16" height="16"/>
<use href="#fl" x="1189" y="342" width="16" height="16"/>
<use href="#fl" x="1189" y="358" width="16" height="16"/>
<use href="#pl" x="1146" y="378" width="9" height="9"/><use href="#fd" x="1169" y="374" width="16" height="16"/>
<use href="#pl" x="1127" y="394" width="9" height="9"/><use href="#fd" x="1150" y="390" width="16" height="16"/>
<use href="#vs" x="1142" y="410" width="9" height="9"/><use href="#gr" x="1151" y="406" width="16" height="16"/>
<use href="#vs" x="1142" y="426" width="9" height="9"/><use href="#vb" x="1151" y="422" width="16" height="16"/>

<!-- scroll arrows -->
<path d="M1099 126.500h10.500M1099 129.500h10.500" stroke="#000"/><path d="M1104.500 121l-3 3h6zM1104.500 135l-3-3h6z" fill="#000"/>
<path d="M1104 141l-4 4h8z" fill="#000"/>
<path d="M1104 712l-4-4h8z" fill="#000"/>
<path d="M290 727.500l4-4v8z" fill="#000"/>
<path d="M1091 727.500l-4-4v8z" fill="#000"/>
<path d="M276 726h7l-3.500 3z" fill="#333"/>
<path d="M1105 796l-4 4h8z" fill="#808080"/>
<path d="M1105 926l-4-4h8z" fill="#808080"/>
<path d="M229 940l4-4v8z" fill="#808080"/>
<path d="M1092 940l-4-4v8z" fill="#808080"/>
<path d="M1124 484.500l4-4v8z" fill="#000"/>
<path d="M1268 484.500l-4-4v8z" fill="#000"/>
<path d="M1261 552h8l-4 4z" fill="#222"/>

<!-- find results toolbar -->
<use href="#gl" x="231" y="769" width="16" height="16"/>
<path d="M253.500 768v18M303.500 768v18M333.500 768v18" stroke="#8e99b0"/>
<use href="#nf" x="260" y="769" width="16" height="16" transform="matrix(-1 0 0 1 536 0)"/>
<use href="#nf" x="283" y="769" width="16" height="16"/>
<path d="M311 771h14M311 774h14M311 777h10M311 780h10" stroke="#98a0b0"/><path d="M321 778l6 6M327 778l-6 6" stroke="#98a0b0" stroke-width="1.500"/>
<circle cx="344" cy="778" r="3.500" fill="#7f8798"/><circle cx="351" cy="778" r="3.500" fill="#7f8798"/><path d="M342 770h3v6h-3zM349 770h3v6h-3z" fill="#8f97a8"/>

<!-- properties toolbar -->
<path d="M1126 573h4v4h-4zM1126 581h4v4h-4z" fill="#f4f4f4" stroke="#445"/><path d="M1132 572h8M1132 575h8M1132 578h8M1132 581h8M1132 584h8" stroke="#778"/>
<text x="1149" y="577" font-family="Liberation Serif,serif" font-size="9" font-weight="bold" fill="#2a4a98">A</text>
<text x="1149" y="586" font-family="Liberation Serif,serif" font-size="9" font-weight="bold" fill="#a03030">Z</text>
<path d="M1161 571v14M1158.500 582l2.500 4 2.500-4z" stroke="#000" fill="#000"/>
<path d="M1171.500 568v20" stroke="#8e99b0"/>
<rect x="1177" y="571" width="15" height="13" fill="#c8cdd8" stroke="#98a0b0"/><path d="M1180 576h9M1180 579h9" stroke="#98a0b0"/>

<!-- bottom tab icons -->
<use href="#sol" x="1123" y="497" width="16" height="16"/>
<use href="#team" x="1202" y="497" width="16" height="16"/>
<use href="#tools" x="10" y="950" width="16" height="16"/>
<use href="#pcs" x="79" y="950" width="16" height="16"/>
<use href="#err" x="229" y="950" width="16" height="16"/>
<use href="#out" x="302" y="950" width="16" height="16"/>
<use href="#fr1" x="366" y="950" width="16" height="16"/>
<use href="#fs" x="463" y="950" width="16" height="16"/>
<use href="#pc2" x="588" y="950" width="16" height="16"/>
<use href="#prop" x="1123" y="950" width="16" height="16"/>
<use href="#sub" x="1202" y="950" width="16" height="16"/>
</svg>
</body></html>
